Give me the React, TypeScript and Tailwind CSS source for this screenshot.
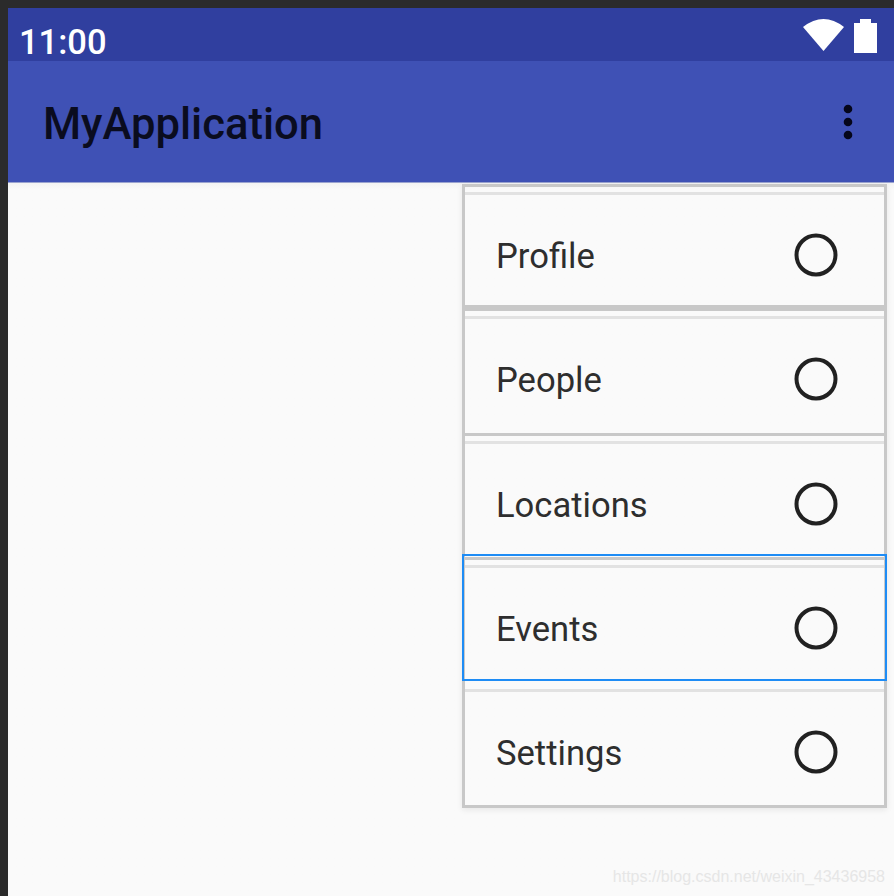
const items = ["Profile", "People", "Locations", "Events", "Settings"];

function Row({ label, index }: { label: string; index: number }) {
  const rowClass =
    index === 0
      ? "h-[124.25px] border-t-[3px] border-b-[3px] border-[#c8c8c8]"
      : index === 4
        ? "h-[124.25px] border-t-[3px] border-t-transparent"
        : "h-[124.25px] border-t-[3px] border-[#c8c8c8]";
  return (
    <div className={rowClass}>
      <div className="h-[5px]" />
      <div className="h-[3px] bg-[#e2e2e2]" />
      <div className="flex h-[113px] items-center justify-between pl-[31px] pr-[46px] pt-[7px]">
        <span className="mt-[3px] text-[34.6px] leading-none text-[#2e2e2e]">{label}</span>
        <svg width="44" height="44" viewBox="0 0 44 44">
          <circle cx="22" cy="22" r="19.5" fill="none" stroke="#212121" strokeWidth="4" />
        </svg>
      </div>
    </div>
  );
}

export default function App() {
  return (
    <div
      className="relative flex h-[896px] w-[894px] flex-col overflow-hidden bg-[#2b2b2b] pl-2 pt-2"
      style={{ fontFamily: "Roboto, sans-serif" }}
    >
      <div className="flex h-[53px] items-center justify-between bg-[#303f9f] pl-[11px] pr-[17px]">
        <span className="mt-[15px] text-[34.5px] font-medium leading-none text-white">11:00</span>
        <div className="flex items-start gap-[10px] pt-[2px]">
          <svg width="41" height="33" viewBox="0 0 41 33">
            <path d="M0 8 Q20.5 -8 41 8 L20.5 32 Z" fill="#ffffff" />
          </svg>
          <svg width="23" height="34" viewBox="0 0 23 34">
            <path d="M6 0 H17 V4 H23 V34 H0 V4 H6 Z" fill="#ffffff" />
          </svg>
        </div>
      </div>
      <div className="flex h-[122px] items-center justify-between border-b border-[#9aa3cf] bg-[#3f51b5] pl-[35px] pr-[41px]">
        <span className="mt-[7px] text-[43.6px] font-medium leading-none text-[#0a0c1f]">MyApplication</span>
        <svg width="10" height="36" viewBox="0 0 10 36">
          <circle cx="5" cy="5" r="4.3" fill="#05061a" />
          <circle cx="5" cy="18" r="4.3" fill="#05061a" />
          <circle cx="5" cy="31" r="4.3" fill="#05061a" />
        </svg>
      </div>
      <div className="flex-1 bg-gradient-to-b from-[#f3f3f3] from-0% to-[#fafafa] to-[1%] pr-[7px] pt-[1px]">
        <div className="relative ml-auto w-[425px] border-x-[3px] border-b-[3px] border-[#c8c8c8] shadow-[0_2px_6px_rgba(0,0,0,0.08)]">
          {items.map((label, i) => (
            <Row key={label} label={label} index={i} />
          ))}
          <div className="absolute left-[-3px] right-[-3px] top-[370px] h-[127px] border-2 border-[#1e8cf5]" />
        </div>
      </div>
      <span
        className="absolute bottom-[9px] right-[9px] text-[16px] leading-5 text-[#e6e6e6]"
        style={{ fontFamily: "'Liberation Sans', sans-serif" }}
      >
        https://blog.csdn.net/weixin_43436958
      </span>
    </div>
  );
}
